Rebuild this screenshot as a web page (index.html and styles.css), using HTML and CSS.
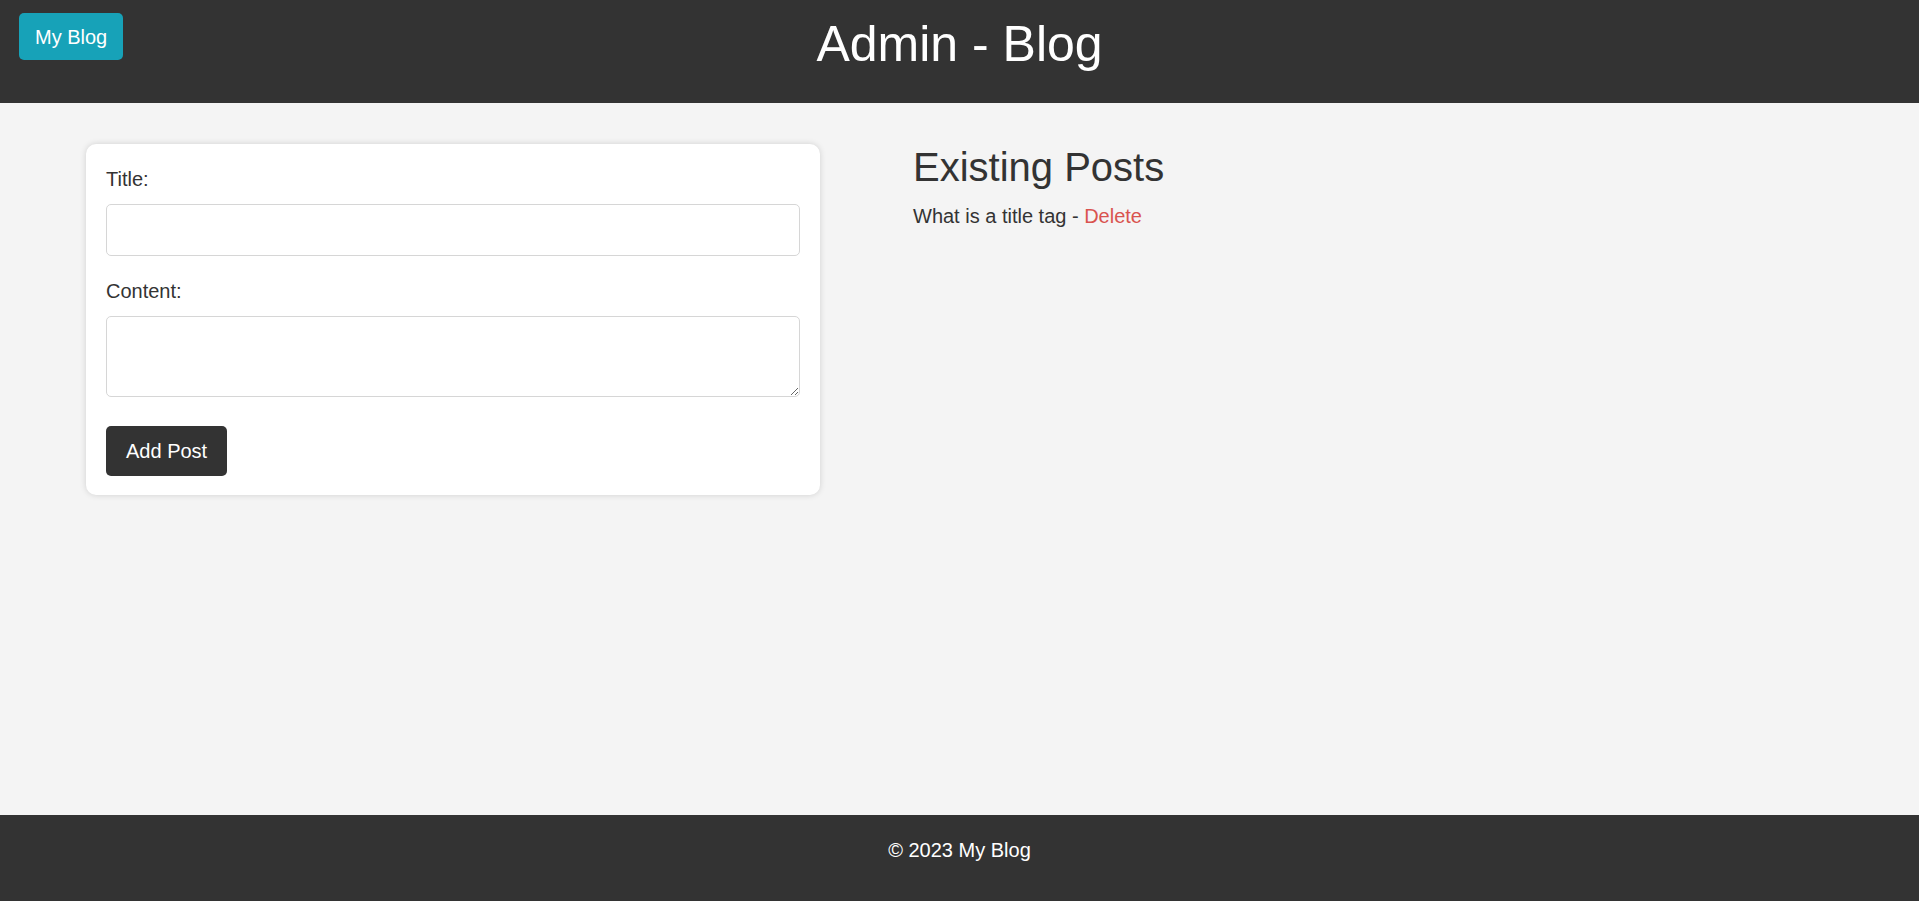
FILE: index.html
```html
<!DOCTYPE html>
<html lang="en">
<head>
<meta charset="utf-8">
<title>Admin - Blog</title>
<link rel="stylesheet" href="styles.css">
</head>
<body>
<div class="page">
  <header class="site-header">
    <div class="nav"><a class="home-btn" href="#">My Blog</a></div>
    <h1 class="site-title">Admin - Blog</h1>
    <div></div>
  </header>
  <main class="main">
    <form class="card">
      <label class="field-label" for="title">Title:</label>
      <input class="field-input" id="title" type="text">
      <label class="field-label" for="content">Content:</label>
      <textarea class="field-textarea" id="content"></textarea>
      <button class="submit-btn" type="button">Add Post</button>
    </form>
    <section class="posts">
      <h2 class="posts-title">Existing Posts</h2>
      <ul class="post-list">
        <li class="post-item">What is a title tag - <a class="delete-link" href="#">Delete</a></li>
      </ul>
    </section>
  </main>
  <footer class="site-footer">
    <p class="footer-text">&copy; 2023 My Blog</p>
  </footer>
</div>
</body>
</html>
```
FILE: styles.css
```css
* { box-sizing: border-box; }
html, body { margin: 0; padding: 0; }
body {
  font-family: "Liberation Sans", Arial, sans-serif;
  font-size: 20px;
  color: #333;
  background: #f4f4f4;
}
.page {
  min-height: 100vh;
  display: flex;
  flex-direction: column;
}
.site-header {
  background: #333;
  height: 103px;
  display: grid;
  grid-template-columns: 1fr auto 1fr;
  align-items: start;
}
.nav { padding: 13px 0 0 19px; }
.home-btn {
  display: inline-block;
  background: #17a2b8;
  color: #fff;
  text-decoration: none;
  font-size: 20px;
  line-height: 23px;
  padding: 13px 16px 11px;
  border-radius: 5px;
}
.site-title {
  margin: 16px 0 0;
  color: #fff;
  font-size: 50px;
  font-weight: normal;
  line-height: 57px;
}
.main {
  flex: 1;
  display: grid;
  grid-template-columns: 734px 1fr;
  column-gap: 93px;
  align-items: start;
  padding: 41px 0 0 86px;
}
.card {
  background: #fff;
  border-radius: 10px;
  box-shadow: 0 0 6px rgba(0,0,0,0.15);
  padding: 24px 20px 19px;
  display: flex;
  flex-direction: column;
  align-items: flex-start;
}
.field-label {
  display: block;
  font-size: 20px;
  line-height: 23px;
  margin-bottom: 13px;
}
.field-input, .field-textarea {
  width: 100%;
  border: 1px solid #d6d6d6;
  border-radius: 5px;
  font-family: inherit;
  font-size: 20px;
  padding: 12px;
  background: #fff;
}
.field-input { height: 52px; margin-bottom: 24px; }
.field-textarea { height: 81px; margin-bottom: 29px; resize: vertical; display: block; }
.submit-btn {
  background: #333;
  color: #fff;
  border: none;
  border-radius: 5px;
  font-family: inherit;
  font-size: 20px;
  line-height: 23px;
  height: 50px;
  padding: 0 20px;
}
.posts-title {
  margin: 0 0 15px;
  font-size: 40px;
  font-weight: normal;
  line-height: 46px;
}
.post-list { list-style: none; margin: 0; padding: 0; }
.post-item { font-size: 20px; line-height: 23px; }
.delete-link { color: #d9534f; text-decoration: none; }
.site-footer {
  background: #333;
  height: 86px;
  padding-top: 24px;
  text-align: center;
}
.footer-text {
  margin: 0;
  color: #fff;
  font-size: 20px;
  line-height: 23px;
}
```
